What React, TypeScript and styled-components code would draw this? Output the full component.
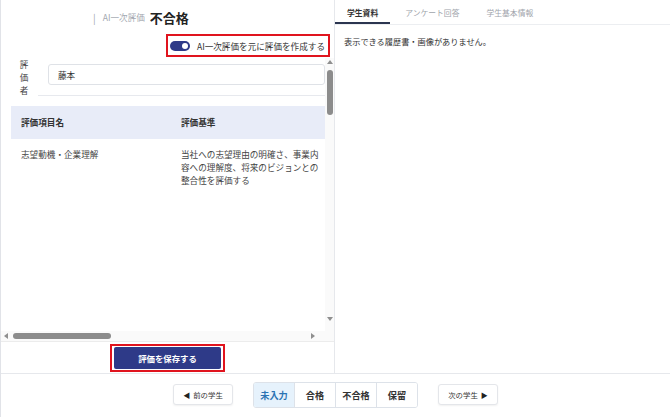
import React from 'react'
import styled, { createGlobalStyle } from 'styled-components'

const GlobalStyle = createGlobalStyle`
  html, body {
    margin: 0;
    padding: 0;
    background: #fff;
  }
  body {
    font-family: 'Noto Sans CJK JP', 'Noto Sans', sans-serif;
    color: #333;
  }
`

const navy = '#2e3a88'

const Shell = styled.div`
  position: relative;
  width: 670px;
  height: 417px;
  display: grid;
  grid-template-rows: 1fr 44px;
  box-sizing: border-box;
  border-left: 1px solid #e1e3e8;
  overflow: hidden;

  &::before {
    content: '';
    position: absolute;
    left: -1px;
    top: 0;
    width: 1px;
    height: 34px;
    background: #98a2b6;
  }
`

const Main = styled.div`
  display: grid;
  grid-template-columns: 334px 1fr;
  min-height: 0;
`

const LeftPanel = styled.section`
  display: flex;
  flex-direction: column;
  border-right: 1px solid #e6e8ec;
  min-height: 0;
`

const Header = styled.div`
  height: 34px;
  display: flex;
  align-items: center;
  padding-left: 92px;
  gap: 5px;
`

const Pipe = styled.span`
  font-size: 10px;
  color: #a3a8b0;
  margin-right: 2px;
`

const SubTitle = styled.span`
  font-size: 8.6px;
  color: #a3a8b0;
`

const Title = styled.h1`
  margin: 0;
  font-size: 13px;
  font-weight: 700;
  color: #222;
`

const ToggleRow = styled.div`
  display: flex;
  justify-content: flex-end;
  padding-right: 4px;
`

const Highlight = styled.div`
  border: 2px solid #e0141e;
  display: flex;
  align-items: center;
  box-sizing: border-box;
`

const ToggleBox = styled(Highlight)`
  height: 23px;
  padding: 0 3px 0 2px;
  gap: 7px;
`

const Switch = styled.span`
  position: relative;
  width: 20px;
  height: 10px;
  border-radius: 5px;
  background: ${navy};

  &::after {
    content: '';
    position: absolute;
    right: 2px;
    top: 2px;
    width: 6px;
    height: 6px;
    border-radius: 50%;
    background: #fff;
  }
`

const ToggleText = styled.span`
  font-size: 8.6px;
  color: #333;
`

const ScrollArea = styled.div`
  flex: 1;
  display: grid;
  grid-template-columns: 1fr 9px;
  grid-template-rows: 1fr 10px;
  min-height: 0;
  margin-top: 1px;
  border-bottom: 1px solid #ececec;
`

const Content = styled.div`
  overflow: hidden;
  padding: 0 0 0 10px;
`

const Evaluator = styled.div`
  display: flex;
  align-items: flex-start;
  height: 39px;
  padding-left: 4px;
`

const VerticalLabel = styled.div`
  width: 18px;
  font-size: 8.6px;
  line-height: 13px;
  color: #444;
  display: flex;
  flex-direction: column;
  align-items: center;
`

const InputWrap = styled.div`
  flex: 1;
  margin-left: 5px;
  padding-top: 6px;
  height: 38px;
  box-sizing: border-box;
  border-bottom: 1px solid #e7e9ee;
`

const Input = styled.div`
  height: 21px;
  margin-left: 10px;
  box-sizing: border-box;
  border: 1px solid #dfe2e7;
  border-radius: 3px;
  font-size: 8.6px;
  padding-left: 9px;
  display: flex;
  align-items: center;
  color: #333;
`

const Table = styled.div`
  margin-top: 9px;
  width: 960px;
`

const Row = styled.div<{ $head?: boolean }>`
  display: grid;
  grid-template-columns: 160px 152px 1fr;
  background: ${p => (p.$head ? '#e8ecf8' : 'transparent')};
  height: ${p => (p.$head ? '33px' : 'auto')};
  align-items: ${p => (p.$head ? 'center' : 'start')};
  padding: ${p => (p.$head ? '0' : '9px 0 0')};
`

const Cell = styled.div<{ $bold?: boolean }>`
  font-size: 8.6px;
  line-height: 13px;
  font-weight: ${p => (p.$bold ? 700 : 400)};
  color: ${p => (p.$bold ? '#333' : '#444')};
  padding-left: 10px;
`

const VBar = styled.div`
  display: flex;
  flex-direction: column;
  align-items: center;
  background: #fafafa;
  padding: 2px 0 10px;
`

const Arrow = styled.span<{ $dir: 'up' | 'down' | 'left' | 'right' }>`
  width: 0;
  height: 0;
  border: 3px solid transparent;
  ${p =>
    p.$dir === 'up'
      ? 'border-bottom: 4px solid #8f8f8f; border-top-width: 0;'
      : p.$dir === 'down'
      ? 'border-top: 4px solid #8f8f8f; border-bottom-width: 0;'
      : p.$dir === 'left'
      ? 'border-right: 4px solid #8f8f8f; border-left-width: 0;'
      : 'border-left: 4px solid #8f8f8f; border-right-width: 0;'}
`

const VThumb = styled.span`
  width: 6px;
  height: 45px;
  margin-top: 6px;
  border-radius: 3px;
  background: #8c8c8c;
`

const Spacer = styled.span`
  flex: 1;
`

const HBar = styled.div`
  display: flex;
  align-items: center;
  background: #fafafa;
  padding: 0 10px 0 3px;
`

const HThumb = styled.span`
  width: 98px;
  height: 6px;
  margin-left: 5px;
  border-radius: 3px;
  background: #8c8c8c;
`

const Corner = styled.div`
  background: #fafafa;
`

const SaveRow = styled.div`
  height: 31px;
  display: flex;
  justify-content: center;
  align-items: center;
`

const SaveBox = styled(Highlight)`
  width: 115px;
  height: 28px;
  justify-content: center;
`

const SaveButton = styled.button`
  width: 107px;
  height: 22px;
  border: none;
  border-radius: 2px;
  background: ${navy};
  color: #fff;
  font-family: inherit;
  font-size: 8.4px;
  font-weight: 700;
  padding: 0;
`

const RightPanel = styled.section`
  display: flex;
  flex-direction: column;
`

const Tabs = styled.div`
  display: flex;
  height: 24px;
  border-bottom: 1px solid #eceef1;
  gap: 3px;
`

const Tab = styled.div<{ $active?: boolean }>`
  padding: 0 12px;
  display: flex;
  align-items: center;
  font-size: 7.8px;
  font-weight: ${p => (p.$active ? 700 : 400)};
  color: ${p => (p.$active ? '#333' : '#a0a4ab')};
  box-shadow: ${p => (p.$active ? 'inset 0 -2px 0 #2b3550' : 'none')};
`

const EmptyText = styled.p`
  margin: 10px 0 0 9px;
  font-size: 8.2px;
  color: #333;
`

const Footer = styled.footer`
  border-top: 1px solid #e6e8ec;
  display: flex;
  align-items: center;
  justify-content: center;
  gap: 20px;
  padding-bottom: 2px;
`

const NavButton = styled.button`
  width: 60px;
  height: 21px;
  border: 1px solid #e4e6ea;
  border-radius: 3px;
  background: #fff;
  box-shadow: 0 1px 2px rgba(0, 0, 0, 0.06);
  font-family: inherit;
  font-size: 7.4px;
  color: #333;
  padding: 0;
  display: flex;
  align-items: center;
  justify-content: center;
  gap: 3px;
`

const Tri = styled.span`
  font-size: 7px;
  color: #222;
`

const Segment = styled.div`
  display: flex;
  height: 24px;
  border: 1px solid #dde2e9;
  border-radius: 3px;
  overflow: hidden;
`

const SegItem = styled.div<{ $active?: boolean }>`
  width: 40px;
  display: flex;
  align-items: center;
  justify-content: center;
  font-size: 9.2px;
  font-weight: 700;
  background: ${p => (p.$active ? '#e6f2fc' : '#fff')};
  color: ${p => (p.$active ? '#2a73b3' : '#333')};
  & + & {
    border-left: 1px solid #dde2e9;
  }
`

const statuses = ['未入力', '合格', '不合格', '保留']

const App = () => {
  return (
    <Shell>
      <GlobalStyle />
      <Main>
        <LeftPanel>
          <Header>
            <Pipe>|</Pipe>
            <SubTitle>AI一次評価</SubTitle>
            <Title>不合格</Title>
          </Header>
          <ToggleRow>
            <ToggleBox>
              <Switch />
              <ToggleText>AI一次評価を元に評価を作成する</ToggleText>
            </ToggleBox>
          </ToggleRow>
          <ScrollArea>
            <Content>
              <Evaluator>
                <VerticalLabel>
                  <span>評</span>
                  <span>価</span>
                  <span>者</span>
                </VerticalLabel>
                <InputWrap>
                  <Input>藤本</Input>
                </InputWrap>
              </Evaluator>
              <Table>
                <Row $head>
                  <Cell $bold>評価項目名</Cell>
                  <Cell $bold>評価基準</Cell>
                  <Cell />
                </Row>
                <Row>
                  <Cell>志望動機・企業理解</Cell>
                  <Cell>
                    当社への志望理由の明確さ、事業内容への理解度、将来のビジョンとの整合性を評価する
                  </Cell>
                  <Cell />
                </Row>
              </Table>
            </Content>
            <VBar>
              <Arrow $dir="up" />
              <VThumb />
              <Spacer />
              <Arrow $dir="down" />
            </VBar>
            <HBar>
              <Arrow $dir="left" />
              <HThumb />
              <Spacer />
              <Arrow $dir="right" />
            </HBar>
            <Corner />
          </ScrollArea>
          <SaveRow>
            <SaveBox>
              <SaveButton>評価を保存する</SaveButton>
            </SaveBox>
          </SaveRow>
        </LeftPanel>
        <RightPanel>
          <Tabs>
            <Tab $active>学生資料</Tab>
            <Tab>アンケート回答</Tab>
            <Tab>学生基本情報</Tab>
          </Tabs>
          <EmptyText>表示できる履歴書・画像がありません。</EmptyText>
        </RightPanel>
      </Main>
      <Footer>
        <NavButton>
          <Tri>◀</Tri>前の学生
        </NavButton>
        <Segment>
          {statuses.map((s, i) => (
            <SegItem key={s} $active={i === 0}>
              {s}
            </SegItem>
          ))}
        </Segment>
        <NavButton>
          次の学生<Tri>▶</Tri>
        </NavButton>
      </Footer>
    </Shell>
  )
}

export default App
